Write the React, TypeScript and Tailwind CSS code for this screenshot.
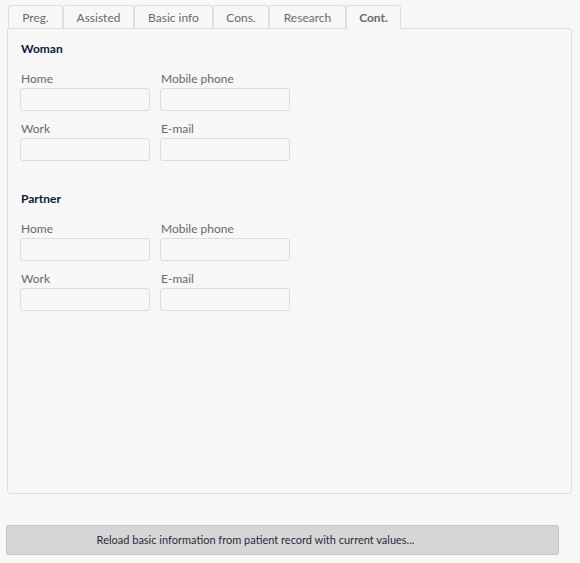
import React from "react";

const TABS = [
  { label: "Preg.", w: "w-[55px]" },
  { label: "Assisted", w: "w-[71px]" },
  { label: "Basic info", w: "w-[79px]" },
  { label: "Cons.", w: "w-[56px]" },
  { label: "Research", w: "w-[77px]" },
  { label: "Cont.", w: "w-[55px]" },
];

function Field({ label }: { label: string }) {
  return (
    <div className="flex w-[130px] flex-col">
      <span className="h-[18px] pl-[1px] text-[12px] leading-[17px] text-[#6f6666]">{label}</span>
      <input
        className="h-[23px] w-[130px] rounded-[3px] border border-[#dcdcdc] bg-[#f7f7f7] outline-none"
        type="text"
      />
    </div>
  );
}

function Group({ title }: { title: string }) {
  return (
    <div className="flex flex-col">
      <h3 className="mb-[14px] pl-[1px] text-[12px] font-bold leading-[14px] text-[#0b1a3a]">{title}</h3>
      <div className="flex flex-col gap-[9px]">
        <div className="flex gap-[10px]">
          <Field label="Home" />
          <Field label="Mobile phone" />
        </div>
        <div className="flex gap-[10px]">
          <Field label="Work" />
          <Field label="E-mail" />
        </div>
      </div>
    </div>
  );
}

export default function App() {
  return (
    <div className="h-[563px] w-[580px] bg-[#f7f7f7] font-['Lato',sans-serif]">
      <div className="pl-[7px] pr-[8px] pt-[5px]">
        <div className="flex h-[23px] pl-[1px]">
          {TABS.map((t) => {
            const active = t.label === "Cont.";
            return (
              <div
                key={t.label}
                className={`${t.w} ${
                  active
                    ? "relative z-10 -mb-px h-[24px] bg-[#f7f7f7] font-bold"
                    : "h-[23px]"
                } flex items-center justify-center rounded-t-[3px] border border-b-0 border-[#dedede] pt-[1px] text-[12px] text-[#6f6868]`}
              >
                {t.label}
              </div>
            );
          })}
        </div>
        <div className="h-[466px] rounded-b-[3px] rounded-tr-[3px] border border-[#dedede] bg-[#f7f7f7] px-[12px] pt-[13px]">
          <div className="flex flex-col gap-[31px]">
            <Group title="Woman" />
            <Group title="Partner" />
          </div>
        </div>
      </div>
      <div className="mt-[31px] pl-[6px]">
        <button className="h-[30px] w-[553px] rounded-[2px] border border-[#c6c6c6] bg-[#d6d6d6] pr-[54px] text-[11px] text-[#2a2a3a]">
          Reload basic information from patient record with current values...
        </button>
      </div>
    </div>
  );
}
